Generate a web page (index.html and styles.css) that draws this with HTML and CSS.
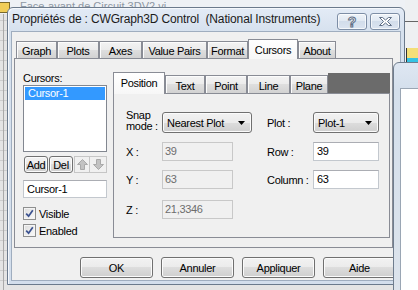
FILE: index.html
```html
<!DOCTYPE html>
<html lang="fr">
<head>
    <meta charset="UTF-8">
    <meta name="viewport" content="width=device-width, initial-scale=1.0">
    <title>Propriétés de : CWGraph3D Control</title>
    <link rel="stylesheet" href="styles.css">
</head>
<body>
    <div class="desktop">
        <!-- front panel window behind the dialog -->
        <div class="bg-top">
            <span class="bg-title">Face-avant de Circuit 3DV2.vi</span>
        </div>
        <div class="bg-icon"></div>
        <div class="bg-right">
            <div class="bg-menu"></div>
            <div class="bg-tool"></div>
        </div>

        <div class="dialog">
            <div class="titlebar">
                <span class="title">Propriétés de : CWGraph3D Control&nbsp; (National Instruments)</span>
                <span class="cap-btn help">?</span>
                <span class="cap-btn close">
                    <svg width="13" height="9" viewBox="0 0 13 9"><polygon points="0.5,0.5 3.5,0.5 6.5,3 9.5,0.5 12.5,0.5 8.5,4.5 12.5,8.5 9.5,8.5 6.5,6 3.5,8.5 0.5,8.5 4.5,4.5" fill="#fff" stroke="#5f6f86"/></svg>
                </span>
            </div>

            <div class="client">
                <div class="tabs">
                    <div class="tab">Graph</div>
                    <div class="tab">Plots</div>
                    <div class="tab">Axes</div>
                    <div class="tab">Value Pairs</div>
                    <div class="tab">Format</div>
                    <div class="tab active">Cursors</div>
                    <div class="tab">About</div>
                </div>

                <div class="panel">
                    <div class="cursor-col">
                        <div class="caption">Cursors:</div>
                        <div class="listbox">
                            <div class="item selected">Cursor-1</div>
                        </div>
                        <div class="list-btns">
                            <span class="btn small">Add</span>
                            <span class="btn small">Del</span>
                            <span class="arrow-btn">
                                <svg width="11" height="11" viewBox="0 0 11 11"><polygon points="5.5,0.5 10.5,5.5 7.5,5.5 7.5,10.5 3.5,10.5 3.5,5.5 0.5,5.5" fill="#c2c2c2" stroke="#a9a9a9"/></svg>
                            </span>
                            <span class="arrow-btn down">
                                <svg width="11" height="11" viewBox="0 0 11 11"><polygon points="5.5,10.5 10.5,5.5 7.5,5.5 7.5,0.5 3.5,0.5 3.5,5.5 0.5,5.5" fill="#c2c2c2" stroke="#a9a9a9"/></svg>
                            </span>
                        </div>
                        <div class="textbox name">Cursor-1</div>
                        <div class="check">
                            <span class="box"><svg width="9" height="9" viewBox="0 0 9 9"><path d="M1.2 4.6 L3.6 7.2 L7.8 1.2" fill="none" stroke="#3b5290" stroke-width="1.7"/></svg></span>
                            Visible
                        </div>
                        <div class="check">
                            <span class="box"><svg width="9" height="9" viewBox="0 0 9 9"><path d="M1.2 4.6 L3.6 7.2 L7.8 1.2" fill="none" stroke="#3b5290" stroke-width="1.7"/></svg></span>
                            Enabled
                        </div>
                    </div>

                    <div class="subtabs">
                        <div class="subtab-row">
                            <div class="tab active">Position</div>
                            <div class="tab">Text</div>
                            <div class="tab">Point</div>
                            <div class="tab">Line</div>
                            <div class="tab">Plane</div>
                            <div class="strip"></div>
                        </div>
                        <div class="subpanel">
                            <div class="frow r1">
                                <span class="lbl two">Snap<br>mode :</span>
                                <div class="combo wide">Nearest Plot
                                    <svg width="7" height="4" viewBox="0 0 7 4"><polygon points="0,0 7,0 3.5,4" fill="#000"/></svg>
                                </div>
                                <span class="lbl">Plot :</span>
                                <div class="combo">Plot-1
                                    <svg width="7" height="4" viewBox="0 0 7 4"><polygon points="0,0 7,0 3.5,4" fill="#000"/></svg>
                                </div>
                            </div>
                            <div class="frow r2">
                                <span class="lbl">X :</span>
                                <div class="textbox disabled">39</div>
                                <span class="lbl">Row :</span>
                                <div class="textbox">39</div>
                            </div>
                            <div class="frow r3">
                                <span class="lbl">Y :</span>
                                <div class="textbox disabled">63</div>
                                <span class="lbl">Column :</span>
                                <div class="textbox">63</div>
                            </div>
                            <div class="frow r4">
                                <span class="lbl">Z :</span>
                                <div class="textbox disabled">21,3346</div>
                            </div>
                        </div>
                    </div>
                </div>

                <div class="actions">
                    <span class="btn">OK</span>
                    <span class="btn">Annuler</span>
                    <span class="btn">Appliquer</span>
                    <span class="btn">Aide</span>
                </div>
            </div>
        </div>

        <!-- block diagram window overlapping the dialog on the right -->
        <div class="side-window">
            <div class="pane"></div>
        </div>
    </div>
</body>
</html>
```

FILE: styles.css
```css
* {
    box-sizing: border-box;
}
body {
    margin: 0;
    font-family: "Liberation Sans", Arial, sans-serif;
    font-size: 11px;
    letter-spacing: -0.3px;
    color: #000;
}
.desktop {
    position: relative;
    width: 418px;
    height: 290px;
    overflow: hidden;
    background-color: #e4e4e4;
    background-image:
        linear-gradient(to right, transparent 3px, #a9a9a9 3px, #a9a9a9 4px, transparent 4px),
        repeating-linear-gradient(to bottom, #cdcdcd 0, #cdcdcd 1px, transparent 1px, transparent 10px);
}

/* background window */
.bg-top {
    position: absolute;
    left: 0;
    top: 0;
    width: 418px;
    height: 14px;
    background: #eef1f5;
}
.bg-title {
    position: absolute;
    left: 20px;
    top: 0;
    font-size: 11px;
    line-height: 12px;
    letter-spacing: 0;
    color: #8d97a3;
    white-space: nowrap;
}
.bg-icon {
    position: absolute;
    left: -1px;
    top: 2px;
    width: 11px;
    height: 11px;
    background: #f0cd58;
    border: 1px solid #7a6a2c;
}
.bg-right {
    position: absolute;
    left: 405px;
    top: 0;
    width: 13px;
    height: 62px;
    background: #eef0f2;
}
.bg-menu {
    margin-top: 21px;
    height: 1px;
    background: #666;
}
.bg-tool {
    margin: 26px 0 0 1px;
    height: 14px;
    background: linear-gradient(#f3df78 0, #f3df78 10px, #35c3e4 10px);
    border-left: 1px solid #333;
}

/* dialog frame */
.dialog {
    position: absolute;
    left: 7px;
    top: 7px;
    width: 398px;
    height: 278px;
    display: flex;
    flex-direction: column;
    padding: 0 3px 3px;
    border: 1px solid #6b7a8c;
    border-radius: 6px 6px 0 0;
    background: linear-gradient(#e3ebf6, #d6e1ee 24px, #d3deec);
    box-shadow: inset 1px 1px 0 #f5f8fc;
}
.titlebar {
    display: flex;
    height: 23px;
    padding-left: 1px;
}
.title {
    flex: 1;
    font-size: 12px;
    letter-spacing: -0.15px;
    line-height: 23px;
    color: #1b1b1b;
    white-space: nowrap;
}
.cap-btn {
    width: 30px;
    height: 17px;
    margin-top: 5px;
    margin-left: 3px;
    display: flex;
    align-items: center;
    justify-content: center;
    border: 1px solid #7d8ea6;
    border-radius: 3px;
    background: linear-gradient(#eef3f9, #e0e8f2 50%, #d2ddeb 50%, #dbe4f0);
    box-shadow: inset 0 0 0 1px rgba(255, 255, 255, 0.7);
}
.cap-btn.close {
    margin-right: 1px;
}
.cap-btn.help {
    font-size: 14px;
    font-weight: bold;
    color: #fff;
    -webkit-text-stroke: 1px #5f6f86;
}

.client {
    flex: 1;
    display: flex;
    flex-direction: column;
    padding: 7px 1px 0 2px;
    background: #f0f0f0;
    border: 1px solid #9fadbf;
}

/* tabs */
.tabs,
.subtab-row {
    display: grid;
    align-items: end;
}
.tabs {
    grid-template-columns: 41px 42px 43px 65px 41px 50px 38px;
    margin-left: 2px;
}
.subtab-row {
    grid-template-columns: 52px 40px 42px 43px 38px 1fr;
}
.tab {
    height: 17px;
    padding-top: 3px;
    line-height: 13px;
    text-align: center;
    white-space: nowrap;
    border: 1px solid #898c95;
    border-bottom: none;
    background: linear-gradient(#f3f3f3, #ebebeb 50%, #dedede 50%, #d2d2d2);
    box-shadow: inset 1px 1px 0 #fcfcfc;
}
.tab.active {
    position: relative;
    z-index: 1;
    height: 20px;
    padding-top: 4px;
    margin-bottom: -1px;
    background: linear-gradient(#ffffff, #f7f7f7);
    box-shadow: none;
}
.subtab-row .tab {
    height: 18px;
    padding-top: 4px;
}
.subtab-row .tab.active {
    height: 22px;
    padding-top: 4px;
}
.strip {
    height: 20px;
    background: #6b6b6b;
}

.panel {
    height: 190px;
    margin-right: 6px;
    display: flex;
    padding: 13px 2px 0 8px;
    border: 1px solid #898c95;
    background: #f0f0f0;
}

/* cursor list column */
.cursor-col {
    width: 84px;
}
.caption {
    height: 13px;
    line-height: 13px;
}
.listbox {
    height: 67px;
    padding: 1px;
    border: 1px solid #828790;
    background: #fff;
}
.item {
    height: 13px;
    line-height: 13px;
    padding-left: 3px;
}
.item.selected {
    background: #3399ff;
    color: #fff;
}
.list-btns {
    display: flex;
    height: 17px;
    margin: 4px 0 0 1px;
}
.btn {
    display: flex;
    align-items: center;
    justify-content: center;
    border: 1px solid #707070;
    border-radius: 3px;
    background: linear-gradient(#f2f2f2, #ebebeb 50%, #dddddd 50%, #cfcfcf);
    box-shadow: inset 0 0 0 1px #fbfbfb;
}
.btn.small {
    width: 24px;
    margin-right: 1px;
}
.arrow-btn {
    width: 16px;
    display: flex;
    align-items: center;
    justify-content: center;
    border: 1px solid #c6c6c6;
    background: #f0f0f0;
}
.arrow-btn.down {
    width: 17px;
    border-left: none;
}
.textbox {
    height: 19px;
    padding-left: 3px;
    line-height: 17px;
    white-space: nowrap;
    border: 1px solid #c3c8ce;
    border-top-color: #abadb3;
    background: #fff;
}
.textbox.name {
    height: 18px;
    margin-top: 7px;
    line-height: 16px;
}
.textbox.disabled {
    width: 71px;
    padding-left: 2px;
    color: #6d6d6d;
    background: #f0f0f0;
    border-color: #c8c8c8;
}
.check {
    display: flex;
    align-items: center;
    height: 13px;
    margin-top: 4px;
}
.textbox.name + .check {
    margin-top: 9px;
}
.box {
    width: 13px;
    height: 13px;
    margin-right: 3px;
    display: flex;
    align-items: center;
    justify-content: center;
    border: 1px solid #8e8f8f;
    background: linear-gradient(135deg, #dcdcdc, #fbfbfb);
    box-shadow: inset 0 0 0 1px #f4f4f4;
}

/* position sub tabs */
.subtabs {
    flex: 1;
    margin-left: 6px;
    display: flex;
    flex-direction: column;
    height: 166px;
}
.subpanel {
    flex: 1;
    padding: 18px 0 0 12px;
    border: 1px solid #898c95;
    background: #f0f0f0;
}
.frow {
    display: grid;
    grid-template-columns: 36px 105px 46px 66px;
    align-items: center;
}
.frow.r1 {
    height: 21px;
}
.frow.r2,
.frow.r3,
.frow.r4 {
    height: 19px;
}
.frow.r2,
.frow.r3 {
    margin-top: 9px;
}
.frow.r4 {
    margin-top: 11px;
}
.lbl.two {
    line-height: 11px;
    margin-top: -3px;
}
.combo {
    height: 21px;
    display: flex;
    align-items: center;
    justify-content: space-between;
    padding: 0 6px 0 4px;
    border: 1px solid #707070;
    border-radius: 3px;
    background: linear-gradient(#f2f2f2, #ebebeb 50%, #dddddd 50%, #cfcfcf);
    box-shadow: inset 0 0 0 1px #fbfbfb;
}
.combo.wide {
    width: 90px;
}

/* bottom buttons */
.actions {
    display: flex;
    justify-content: flex-end;
    gap: 8px;
    margin: 9px 3px 0 0;
}
.actions .btn {
    width: 73px;
    height: 21px;
}

.side-window {
    position: absolute;
    left: 393px;
    top: 62px;
    width: 40px;
    height: 240px;
    padding: 25px 0 0 6px;
    border: 1px solid #6f7d8e;
    border-radius: 6px 0 0 0;
    background: linear-gradient(#dfe7f2, #d4dfec 26px, #dde4ec);
}
.pane {
    height: 100%;
    border: 1px solid #9aa6b4;
    background: #fff;
}
```
